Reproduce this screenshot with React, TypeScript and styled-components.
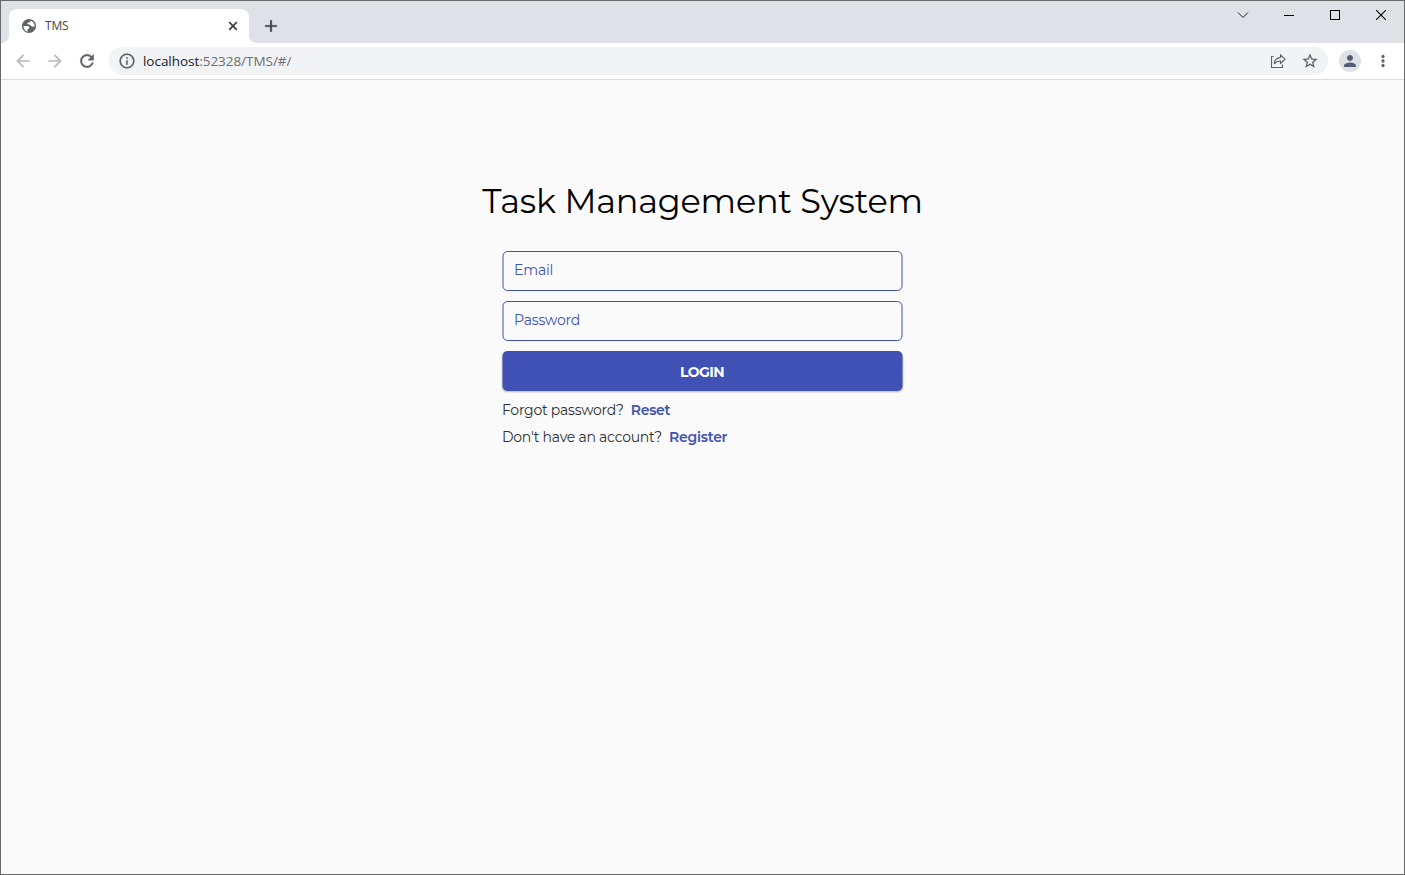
import React from "react";
import styled, { createGlobalStyle } from "styled-components";
import { MdArrowBack, MdArrowForward, MdRefresh, MdInfoOutline, MdStarBorder, MdMoreVert, MdPerson, MdAdd } from "react-icons/md";

const Global = createGlobalStyle`
  * { box-sizing: border-box; }
  body { margin: 0; background: #fafafa; overflow: hidden; }
  svg path[fill="none"]:first-child { stroke: none; }
`;

const Window = styled.div`
  width: 1405px;
  height: 875px;
  border: 1px solid #69696c;
  background: #fafafa;
  display: flex;
  flex-direction: column;
  font-family: "Open Sans", sans-serif;
`;

const TabStrip = styled.header`
  height: 42px;
  flex: none;
  background: #dee1e6;
  display: flex;
  align-items: flex-end;
`;

const Flare = styled.span<{ $side: "left" | "right" }>`
  width: 8px;
  height: 8px;
  background: radial-gradient(circle at ${(p) => (p.$side === "left" ? "0 0" : "100% 0")}, transparent 7.5px, #fff 8.5px);
`;

const Tab = styled.div`
  width: 240px;
  height: 34px;
  padding: 0 11px 0 12px;
  border-radius: 8px 8px 0 0;
  background: #fff;
  display: flex;
  align-items: center;
  color: #45484c;
`;

const TabTitle = styled.span`
  flex: 1;
  margin-left: 8px;
  font-size: 12px;
  line-height: 16px;
  letter-spacing: -0.15px;
`;

const NewTab = styled.div`
  width: 28px;
  height: 34px;
  display: flex;
  align-items: center;
  justify-content: center;
  color: #3c4043;

  svg {
    stroke: currentColor;
    stroke-width: 0.3px;
  }
`;

const WindowControls = styled.div`
  margin-left: auto;
  align-self: flex-start;
  display: flex;
  height: 28px;
`;

const Control = styled.div`
  width: 46px;
  display: flex;
  align-items: center;
  justify-content: center;
`;

const Toolbar = styled.div`
  height: 37px;
  flex: none;
  background: #fff;
  border-bottom: 1px solid #dadce0;
  display: flex;
  align-items: center;
  padding: 0 12px;
  color: #5f6368;
`;

const NavButton = styled.span<{ $muted?: boolean }>`
  width: 32px;
  display: flex;
  color: ${(p) => (p.$muted ? "#babcbe" : "#5f6368")};

  svg {
    stroke: currentColor;
    stroke-width: ${(p) => (p.$muted ? "0.2px" : "0.5px")};
  }
`;

const AddressBar = styled.div`
  flex: 1;
  height: 28px;
  border-radius: 14px;
  background: #f1f3f4;
  display: flex;
  align-items: center;
  padding: 0 9px;
  margin-right: 11px;

  > svg {
    stroke: currentColor;
    stroke-width: 0.2px;
  }
`;

const Url = styled.span`
  flex: 1;
  margin-left: 7px;
  font-size: 13.5px;
  line-height: 20px;
  letter-spacing: -0.04px;
  color: #6b6f74;
`;

const Host = styled.span`
  color: #202124;
`;

const ShareSlot = styled.span`
  display: flex;
  margin-right: 15px;
`;

const Avatar = styled.span`
  width: 22px;
  height: 22px;
  border-radius: 50%;
  background: #dee1e6;
  color: #525c75;
  display: flex;
  align-items: center;
  justify-content: center;
  margin-right: 13px;
`;

const MenuSlot = styled.span`
  display: flex;

  svg {
    stroke: currentColor;
    stroke-width: 0.4px;
  }
`;

const Page = styled.main`
  flex: 1;
  display: flex;
  flex-direction: column;
  align-items: center;
  padding-top: 96px;
  font-family: "Montserrat", "Inter", sans-serif;
`;

const Title = styled.h1`
  margin: 0 0 25px;
  height: 50px;
  line-height: 50px;
  font-size: 33.5px;
  font-weight: 400;
  letter-spacing: -0.2px;
  color: #000;
  white-space: nowrap;
`;

const Form = styled.form`
  width: 400px;
  display: flex;
  flex-direction: column;
  gap: 10px;
  transform: translateX(-0.5px);
`;

const Field = styled.div`
  height: 40px;
  padding: 0 11px;
  border: 1px solid #3f51b5;
  border-radius: 5px;
  color: #3f51b5;
  font-size: 14px;
  letter-spacing: -0.16px;
  line-height: 36px;
`;

const LoginButton = styled.button`
  height: 40px;
  border: 0;
  padding: 2px 0 0;
  border-radius: 5px;
  background: #3f51b5;
  box-shadow: 0 1px 2px rgba(0, 0, 0, 0.28);
  color: #fff;
  font-family: inherit;
  font-size: 14px;
  letter-spacing: -0.55px;
  font-weight: 700;
`;

const Links = styled.div`
  display: flex;
  flex-direction: column;
  margin-top: -4px;
`;

const LinkRow = styled.p`
  margin: 0;
  height: 27px;
  line-height: 27px;
  font-size: 14px;
  letter-spacing: -0.24px;
  color: #303030;
  display: flex;
  gap: 7px;
`;

const Action = styled.a`
  color: #3f51b5;
  font-weight: 600;
`;

export default function App() {
  return (
    <Window>
      <Global />
      <TabStrip>
        <Flare $side="left" />
        <Tab>
          <svg width="16" height="16" viewBox="0 0 16 16">
            <circle cx="8" cy="8" r="7.1" fill="#5f6368" />
            <path d="M2.500 8h3.300c1.900 0 2.500.6 2.500 1.600s-.5 1.400-1.700 1.400v2.700C4.200 13.200 2.400 11.200 2.500 8zM9.500 2.500c.1 1.300-.4 1.900-1.700 1.900-.9 0-1.400.4-1.400 1.100 0 .8.600 1.100 1.700 1.100 1 0 1.300.8 2 1.500.7.600 1.800.7 3.500.4C13.600 5.700 12.200 3.300 9.500 2.500z" fill="#fff" />
          </svg>
          <TabTitle>TMS</TabTitle>
          <svg width="10" height="10" viewBox="0 0 10 10"><path d="M1.200 1.200L8.800 8.800M8.800 1.200L1.200 8.800" stroke="#3c4043" strokeWidth="1.7" /></svg>
        </Tab>
        <Flare $side="right" />
        <NewTab><MdAdd size={20} /></NewTab>
        <WindowControls>
          <Control><svg width="12" height="8" viewBox="0 0 12 8"><polyline points="1,1.5 6,6.5 11,1.5" fill="none" stroke="#222" /></svg></Control>
          <Control><svg width="10" height="10" viewBox="0 0 10 10"><path d="M0 5.500H10" stroke="#000" /></svg></Control>
          <Control><svg width="10" height="10" viewBox="0 0 10 10"><rect x=".5" y=".5" width="9" height="9" fill="none" stroke="#000" /></svg></Control>
          <Control><svg width="10" height="10" viewBox="0 0 10 10"><path d="M0 0L10 10M10 0L0 10" stroke="#000" strokeWidth="1.100" /></svg></Control>
        </WindowControls>
      </TabStrip>
      <Toolbar>
        <NavButton $muted><MdArrowBack size={20} /></NavButton>
        <NavButton $muted><MdArrowForward size={20} /></NavButton>
        <NavButton><MdRefresh size={20} /></NavButton>
        <AddressBar>
          <MdInfoOutline size={18} />
          <Url><Host>localhost</Host>:52328/TMS/#/</Url>
          <ShareSlot>
            <svg width="16" height="16" viewBox="0 0 16 16" fill="none" stroke="#5f6368" strokeWidth="1.100">
              <path d="M3.500 3.500H1.500V14.500H12.500V11.500" />
              <path d="M10.500 2L15 6.200L10.500 10.400V8C7.500 8 5.500 9 4 11C4.500 7.500 6.500 4.900 10.500 4.400Z" />
            </svg>
          </ShareSlot>
          <MdStarBorder size={18} />
        </AddressBar>
        <Avatar><MdPerson size={18} /></Avatar>
        <MenuSlot><MdMoreVert size={18} /></MenuSlot>
      </Toolbar>
      <Page>
        <Title>Task Management System</Title>
        <Form>
          <Field>Email</Field>
          <Field>Password</Field>
          <LoginButton type="button">LOGIN</LoginButton>
          <Links>
            <LinkRow>Forgot password? <Action>Reset</Action></LinkRow>
            <LinkRow>Don't have an account? <Action>Register</Action></LinkRow>
          </Links>
        </Form>
      </Page>
    </Window>
  );
}
